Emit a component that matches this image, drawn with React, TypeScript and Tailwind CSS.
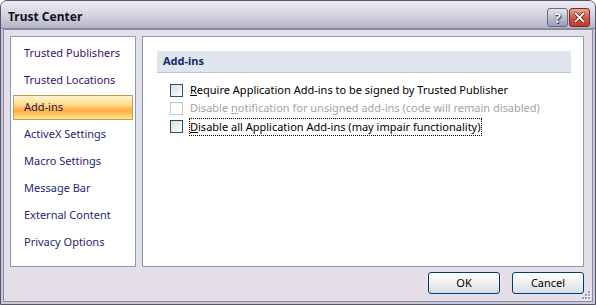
import React from "react";

const items = [
  "Trusted Publishers",
  "Trusted Locations",
  "Add-ins",
  "ActiveX Settings",
  "Macro Settings",
  "Message Bar",
  "External Content",
  "Privacy Options",
];

function CheckBox({ disabled }: { disabled?: boolean }) {
  return (
    <div
      className={
        disabled
          ? "w-[13px] h-[13px] border border-[#cac8bb] bg-white shrink-0"
          : "w-[13px] h-[13px] border border-[#1c5180] bg-gradient-to-br from-[#dcdcd7] to-white shrink-0"
      }
    />
  );
}

export default function App() {
  return (
    <div
      className="w-[596px] h-[305px] bg-white"
      style={{ fontFamily: '"Noto Sans", "Open Sans", sans-serif' }}
    >
      <div className="w-[596px] h-[305px] rounded-t-[7px] border border-[#55556a] bg-[#c9c9d7] flex flex-col overflow-hidden">
        {/* Title bar */}
        <div className="h-[28px] shrink-0 flex items-start justify-between pl-[7px] pr-[5px] pt-[6px] bg-gradient-to-b from-[#ececf2] via-[#d6d6e2] to-[#b4b4c8] border-b border-[#8a8aa0]">
          <div className="text-[12px] font-bold text-[#101018] whitespace-nowrap leading-[16px] pt-[2px]">
            Trust Center
          </div>
          <div className="flex gap-[1px] pt-[1px]">
            <div className="w-[21px] h-[19px] rounded-[3px] border border-[#6a6a86] bg-gradient-to-b from-[#e6e6f0] to-[#9c9cb8] flex items-center justify-center text-[14px] font-bold text-[#f4f4fa] leading-none"
              style={{ textShadow: "0 0 1px #33334a, 1px 1px 0 #44445c" }}>
              ?
            </div>
            <div className="w-[21px] h-[19px] rounded-[3px] border border-[#7a2a22] bg-gradient-to-b from-[#eaa696] via-[#d35a48] to-[#c03a2a] flex items-center justify-center">
              <svg width="11" height="11" viewBox="0 0 11 11">
                <path d="M1.5 1.5 L9.5 9.5 M9.5 1.5 L1.5 9.5" stroke="#5a1a12" strokeWidth="3.2" strokeLinecap="square" />
                <path d="M1.5 1.5 L9.5 9.5 M9.5 1.5 L1.5 9.5" stroke="#ffffff" strokeWidth="1.8" strokeLinecap="square" />
              </svg>
            </div>
          </div>
        </div>
        {/* Body frame */}
        <div className="flex-1 px-[2px] pb-[2px]">
          <div className="h-full border border-[#8a8aa0] bg-[#e5e0e7] flex flex-col relative">
            <div className="flex gap-[6px] pl-[6px] pt-[6px]">
              {/* Left list */}
              <div className="w-[126px] h-[231px] border border-[#7f9db9] bg-white pt-[4px] px-[2px] flex flex-col gap-[2px]">
                {items.map((t) =>
                  t === "Add-ins" ? (
                    <div
                      key={t}
                      className="h-[25px] flex items-center pl-[10px] text-[11px] text-[#1b1f4a] border border-[#c29a52] bg-[linear-gradient(to_bottom,#fff4cf_0%,#ffd88a_40%,#ffac42_62%,#ffc95e_80%,#ffe58e_100%)] whitespace-nowrap"
                    >
                      {t}
                    </div>
                  ) : (
                    <div
                      key={t}
                      className={
                        "h-[25px] flex items-center pl-[11px] text-[11px] whitespace-nowrap " +
                        (t.startsWith("Trusted") ? "text-[#3a1070]" : "text-[#1f2678]")
                      }
                    >
                      {t}
                    </div>
                  )
                )}
              </div>
              {/* Right panel */}
              <div className="w-[442px] h-[231px] border border-[#7f9db9] bg-white pt-[14px] pl-[14px] pr-[12px]">
                <div className="h-[22px] bg-[#dfe5ef] border-b border-[#c3c6cd] flex items-center pl-[6px] text-[11px] font-bold text-[#152a66]">
                  Add-ins
                </div>
                <div className="pl-[13px] pt-[11px] flex flex-col gap-[5px] text-[11px] whitespace-nowrap">
                  <div className="flex items-center gap-[7px] h-[13px]">
                    <CheckBox />
                    <span className="text-black">
                      <u>R</u>equire Application Add-ins to be signed by Trusted Publisher
                    </span>
                  </div>
                  <div className="flex items-center gap-[7px] h-[13px]">
                    <CheckBox disabled />
                    <span className="text-[#a3a3a3]">
                      Disable <u>n</u>otification for unsigned add-ins (code will remain disabled)
                    </span>
                  </div>
                  <div className="flex items-center gap-[6px] h-[13px]">
                    <CheckBox />
                    <span className="text-black border border-dotted border-black leading-[16px]">
                      <u>D</u>isable all Application Add-ins (may impair functionality)
                    </span>
                  </div>
                </div>
              </div>
            </div>
            {/* Buttons */}
            <div className="flex justify-end gap-[12px] pr-[8px] pt-[5px]">
              <button className="w-[72px] h-[22px] rounded-[3px] border border-[#003c74] bg-gradient-to-b from-white via-[#f0f0ee] to-[#d8dde8] text-[11px] text-black flex items-center justify-center">
                OK
              </button>
              <button className="w-[72px] h-[22px] rounded-[3px] border border-[#003c74] bg-gradient-to-b from-white via-[#f0f0ee] to-[#d8dde8] text-[11px] text-black flex items-center justify-center">
                Cancel
              </button>
            </div>
            {/* Size grip */}
            <svg className="absolute right-[1px] bottom-[1px]" width="10" height="10" viewBox="0 0 10 10">
              {[[8, 2], [8, 5], [5, 5], [8, 8], [5, 8], [2, 8]].map(([x, y], i) => (
                <g key={i}>
                  <rect x={x} y={y} width="2" height="2" fill="#ffffff" />
                  <rect x={x - 1} y={y - 1} width="2" height="2" fill="#9a9aae" />
                </g>
              ))}
            </svg>
          </div>
        </div>
      </div>
    </div>
  );
}
